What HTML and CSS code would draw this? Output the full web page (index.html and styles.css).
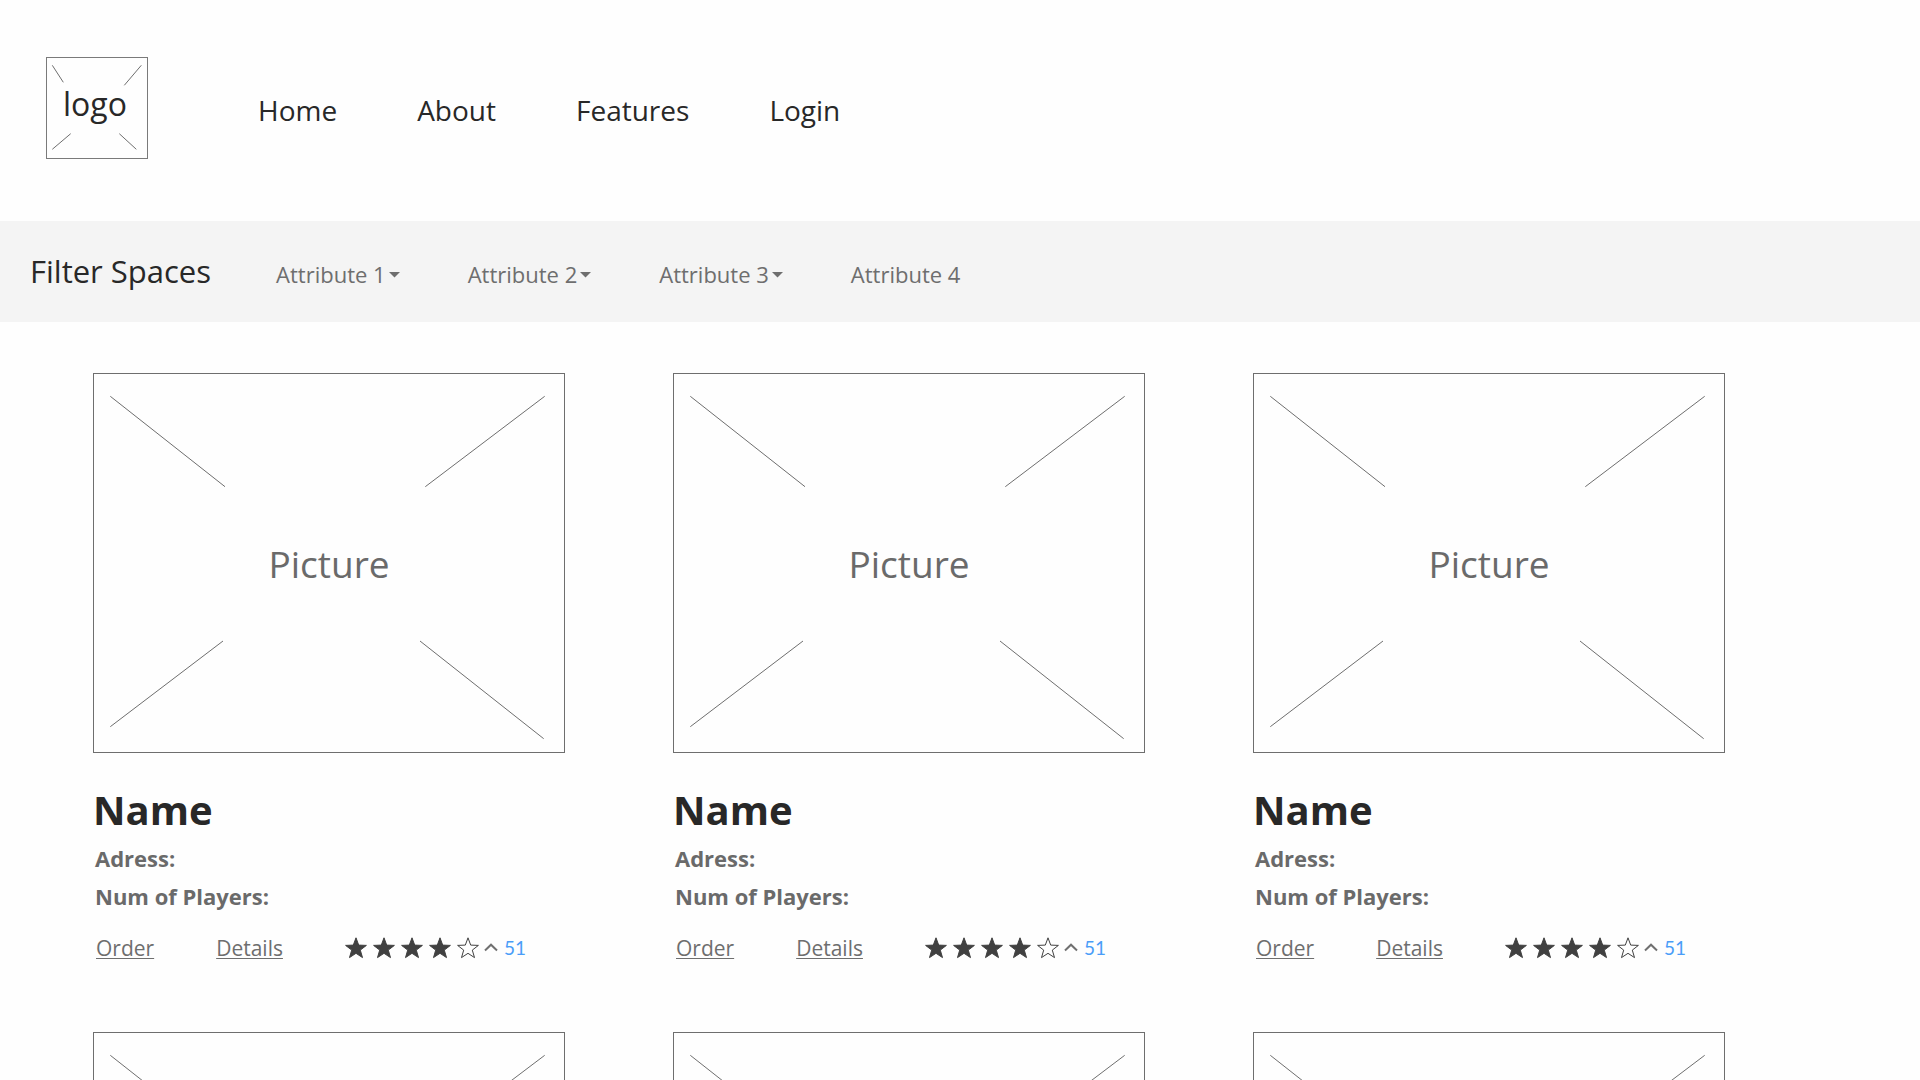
FILE: index.html
```html
<!DOCTYPE html>
<html lang="en">
<head>
<meta charset="utf-8">
<meta name="viewport" content="width=device-width, initial-scale=1">
<title>Spaces</title>
<link rel="stylesheet" href="styles.css">
</head>
<body>
<svg class="sprite" aria-hidden="true">
  <symbol id="cross" viewBox="1 1 470 378">
    <path d="M17.3 23.3L132 113.7M451.7 23.3L332.3 113.7M17.3 353.7L130 268M327 268L450.7 365.7"/>
  </symbol>
  <symbol id="star" viewBox="0 0 22 22">
    <path d="M11 .8L13.7 8.1L21.4 8.4L15.3 13.1L17.5 20.6L11 16.3L4.5 20.6L6.7 13.1L.6 8.4L8.3 8.1Z"/>
  </symbol>
  <symbol id="chevron" viewBox="0 0 14 10">
    <path d="M1 7.5L7 1.7L13 7.5"/>
  </symbol>
  <symbol id="caret" viewBox="0 0 11 6">
    <path d="M0 0H11L5.5 5.6Z"/>
  </symbol>
</svg>

<header class="header">
  <a class="logo" href="#">
    <svg class="lines" viewBox="1 1 100 100" aria-hidden="true"><path d="M6.3 8.3L17.3 25.3M95.3 8.3L78.3 28.3M6.3 92.3L24.7 76.7M73.3 76.7L90.3 92.3"/></svg>
    <span class="logo-text">logo</span>
  </a>
  <nav class="nav">
    <a href="#">Home</a>
    <a href="#">About</a>
    <a href="#">Features</a>
    <a href="#">Login</a>
  </nav>
</header>

<section class="filters">
  <h2 class="filters-title">Filter Spaces</h2>
  <div class="filters-list">
    <button class="filter" type="button">Attribute 1<svg class="caret" aria-hidden="true"><use href="#caret"/></svg></button>
    <button class="filter" type="button">Attribute 2<svg class="caret" aria-hidden="true"><use href="#caret"/></svg></button>
    <button class="filter" type="button">Attribute 3<svg class="caret" aria-hidden="true"><use href="#caret"/></svg></button>
    <button class="filter" type="button">Attribute 4</button>
  </div>
</section>

<main class="spaces">
  <article class="card">
    <div class="picture"><svg class="lines" aria-hidden="true"><use href="#cross"/></svg><span class="picture-text">Picture</span></div>
    <h3 class="name">Name</h3>
    <p class="fact">Adress:</p>
    <p class="fact">Num of Players:</p>
    <div class="actions">
      <a href="#">Order</a>
      <a href="#">Details</a>
      <div class="rating">
        <svg class="star"><use href="#star"/></svg><svg class="star"><use href="#star"/></svg><svg class="star"><use href="#star"/></svg><svg class="star"><use href="#star"/></svg><svg class="star star-empty"><use href="#star"/></svg>
        <svg class="chevron"><use href="#chevron"/></svg>
        <span class="votes">51</span>
      </div>
    </div>
  </article>
  <article class="card">
    <div class="picture"><svg class="lines" aria-hidden="true"><use href="#cross"/></svg><span class="picture-text">Picture</span></div>
    <h3 class="name">Name</h3>
    <p class="fact">Adress:</p>
    <p class="fact">Num of Players:</p>
    <div class="actions">
      <a href="#">Order</a>
      <a href="#">Details</a>
      <div class="rating">
        <svg class="star"><use href="#star"/></svg><svg class="star"><use href="#star"/></svg><svg class="star"><use href="#star"/></svg><svg class="star"><use href="#star"/></svg><svg class="star star-empty"><use href="#star"/></svg>
        <svg class="chevron"><use href="#chevron"/></svg>
        <span class="votes">51</span>
      </div>
    </div>
  </article>
  <article class="card">
    <div class="picture"><svg class="lines" aria-hidden="true"><use href="#cross"/></svg><span class="picture-text">Picture</span></div>
    <h3 class="name">Name</h3>
    <p class="fact">Adress:</p>
    <p class="fact">Num of Players:</p>
    <div class="actions">
      <a href="#">Order</a>
      <a href="#">Details</a>
      <div class="rating">
        <svg class="star"><use href="#star"/></svg><svg class="star"><use href="#star"/></svg><svg class="star"><use href="#star"/></svg><svg class="star"><use href="#star"/></svg><svg class="star star-empty"><use href="#star"/></svg>
        <svg class="chevron"><use href="#chevron"/></svg>
        <span class="votes">51</span>
      </div>
    </div>
  </article>
  <article class="card">
    <div class="picture"><svg class="lines" aria-hidden="true"><use href="#cross"/></svg></div>
  </article>
  <article class="card">
    <div class="picture"><svg class="lines" aria-hidden="true"><use href="#cross"/></svg></div>
  </article>
  <article class="card">
    <div class="picture"><svg class="lines" aria-hidden="true"><use href="#cross"/></svg></div>
  </article>
</main>
</body>
</html>
```

FILE: styles.css
```css
* {
  box-sizing: border-box;
}

body {
  margin: 0;
  background: #fefefe;
  color: #282828;
  font-family: "Open Sans", "Noto Sans", sans-serif;
}

h2,
h3,
p {
  margin: 0;
}

.sprite {
  display: none;
}

.lines {
  width: 100%;
  height: 100%;
  fill: none;
  stroke: #6e6e6e;
  stroke-width: 1;
}

/* Header */
.header {
  display: flex;
  align-items: center;
  gap: 110px;
  padding: 57px 46px 62px;
}

.logo {
  display: grid;
  width: 102px;
  height: 102px;
  border: 1px solid #7a7a7a;
  color: inherit;
  text-decoration: none;
}

.logo > *,
.picture > * {
  grid-area: 1 / 1;
}

.logo-text {
  place-self: center;
  padding: 0 4px 8px 0;
  font-size: 32px;
  line-height: 40px;
}

.nav {
  display: flex;
  flex-wrap: wrap;
  gap: 80px;
  padding-top: 4px;
}

.nav a {
  color: inherit;
  font-size: 28px;
  line-height: 40px;
  text-decoration: none;
}

/* Filter bar */
.filters {
  display: flex;
  align-items: baseline;
  gap: 65px;
  padding: 26px 30px 27px;
  background: #f4f4f4;
}

.filters-title {
  font-size: 31px;
  font-weight: 400;
  line-height: 48px;
}

.filters-list {
  display: flex;
  flex-wrap: wrap;
  gap: 68px;
}

.filter {
  padding: 0;
  border: 0;
  background: none;
  color: #6e6e6e;
  font: 22px/32px "Open Sans", "Noto Sans", sans-serif;
}

.caret {
  width: 11px;
  height: 6px;
  margin-left: 3px;
  vertical-align: 5px;
  fill: #6e6e6e;
}

/* Cards */
.spaces {
  display: grid;
  grid-template-columns: repeat(3, 1fr);
  gap: 68px 108px;
  padding: 51px 195px 68px 93px;
}

.picture {
  display: grid;
  aspect-ratio: 472 / 380;
  border: 1px solid #6e6e6e;
}

.picture-text {
  place-self: center;
  padding-top: 2px;
  color: #6a6a6a;
  font-size: 37px;
  line-height: 48px;
}

.name {
  margin-top: 28px;
  font-size: 40px;
  font-weight: 700;
  line-height: 58px;
}

.fact {
  padding-left: 2px;
  color: #6a6a6a;
  font-size: 22px;
  font-weight: 700;
  line-height: 38px;
}

.actions {
  display: flex;
  align-items: center;
  gap: 62px;
  margin-top: 17px;
  padding-left: 3px;
}

.actions a {
  color: #6e6e6e;
  font-size: 21px;
  line-height: 32px;
  text-decoration-thickness: 1px;
  text-underline-offset: 2px;
}

.rating {
  display: flex;
  align-items: center;
  gap: 6px;
}

.star {
  width: 22px;
  height: 22px;
  fill: #404040;
  stroke: #404040;
  stroke-linejoin: round;
}

.star-empty {
  fill: none;
}

.chevron {
  width: 14px;
  height: 10px;
  margin-left: -1px;
  fill: none;
  stroke: #707070;
  stroke-width: 2;
}

.votes {
  color: #4a9df8;
  font-family: Lato, sans-serif;
  font-size: 19px;
  line-height: 24px;
}
```
